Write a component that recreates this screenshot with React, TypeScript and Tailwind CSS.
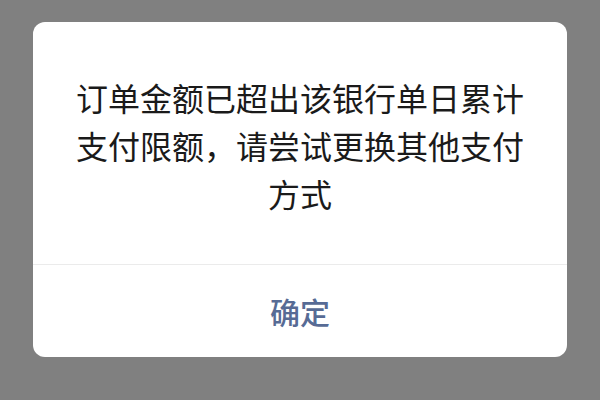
export default function App() {
  return (
    <div className="w-[600px] h-[400px] bg-[#808080] flex justify-center pt-[22px] font-['Noto_Sans_CJK_SC',sans-serif]">
      <div className="w-[534px] h-[335px] bg-white rounded-[12px] flex flex-col overflow-hidden">
        <div className="flex-1 px-[43px] pt-[51px] text-center text-[32px] leading-[48px] text-[#1a1a1a]">
          订单金额已超出该银行单日累计支付限额，请尝试更换其他支付方式
        </div>
        <div className="h-px bg-[#ebebeb]" />
        <button className="h-[92px] flex items-center justify-center text-[30px] font-medium text-[#576b95]">
          确定
        </button>
      </div>
    </div>
  );
}
